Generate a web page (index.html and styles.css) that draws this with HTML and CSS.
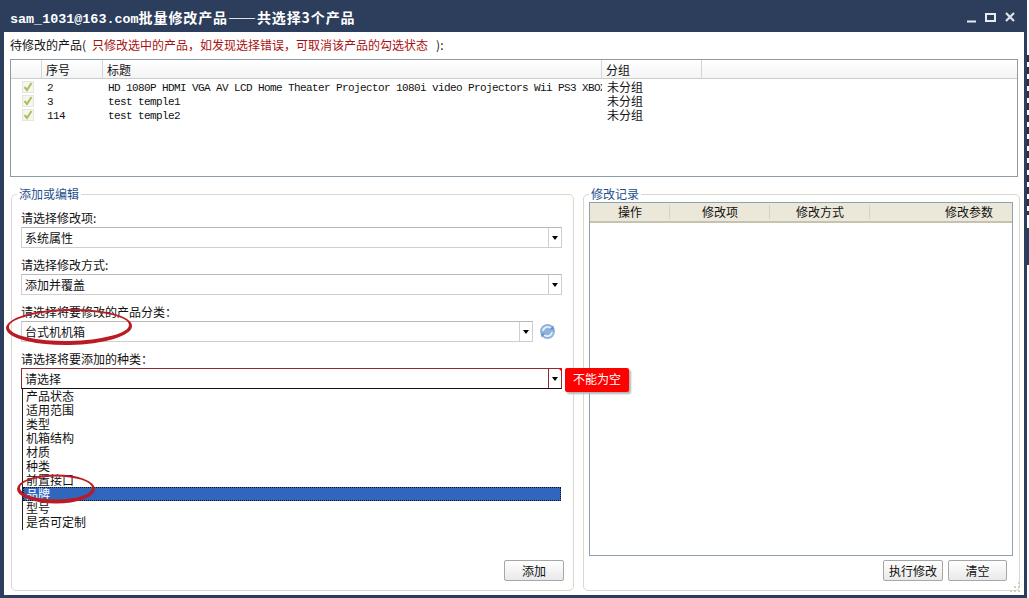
FILE: index.html
```html
<!DOCTYPE html>
<html lang="zh">
<head>
<meta charset="utf-8">
<title>批量修改产品</title>
<link rel="stylesheet" href="styles.css">
</head>
<body>
<div class="window">
  <header class="titlebar">
    <div class="title"><span class="t-lat">sam_1031@163.com</span><span class="t-cjk">批量修改产品——共选择3个产品</span></div>
    <div class="controls">
      <svg width="50" height="14" viewBox="0 0 50 14"><path d="M1 9.500h9" stroke="#e8ecf2" stroke-width="2"/><rect x="20" y="2" width="9" height="7" fill="none" stroke="#e8ecf2" stroke-width="2"/><path d="M40 1l8 8M48 1l-8 8" stroke="#dfe4ec" stroke-width="2.200"/></svg>
    </div>
  </header>
  <main class="content">
    <p class="notice">待修改的产品(<span class="warn">只修改选中的产品&#xFF0C;如发现选择错误&#xFF0C;可取消该产品的勾选状态</span><span class="close">):</span></p>
    <section class="grid">
      <div class="grid-head">
        <div class="gc c0"></div><div class="gc c1">序号</div><div class="gc c2">标题</div><div class="gc c3">分组</div><div class="gc c4"></div>
      </div>
      <div class="grid-row">
        <div class="c0 check"><svg width="12" height="12" viewBox="0 0 12 12"><rect x=".5" y=".5" width="11" height="11" fill="#f6f6ef" stroke="#e6e6dc"/><path d="M2.500 6l2.500 3 4.500-7" fill="none" stroke="#a8c062" stroke-width="2"/></svg></div>
        <div class="c1 cell mono">2</div><div class="c2 cell mono">HD 1080P HDMI VGA AV LCD Home Theater Projector 1080i video Projectors Wii PS3 XBOX</div><div class="c3 cell">未分组</div>
      </div>
      <div class="grid-row">
        <div class="c0 check"><svg width="12" height="12" viewBox="0 0 12 12"><rect x=".5" y=".5" width="11" height="11" fill="#f6f6ef" stroke="#e6e6dc"/><path d="M2.500 6l2.500 3 4.500-7" fill="none" stroke="#a8c062" stroke-width="2"/></svg></div>
        <div class="c1 cell mono">3</div><div class="c2 cell mono">test temple1</div><div class="c3 cell">未分组</div>
      </div>
      <div class="grid-row">
        <div class="c0 check"><svg width="12" height="12" viewBox="0 0 12 12"><rect x=".5" y=".5" width="11" height="11" fill="#f6f6ef" stroke="#e6e6dc"/><path d="M2.500 6l2.500 3 4.500-7" fill="none" stroke="#a8c062" stroke-width="2"/></svg></div>
        <div class="c1 cell mono">114</div><div class="c2 cell mono">test temple2</div><div class="c3 cell">未分组</div>
      </div>
    </section>
    <div class="panels">
      <section class="panel panel-left">
        <h2 class="legend">添加或编辑</h2>
        <div class="field">
          <label class="lbl">请选择修改项:</label>
          <div class="select"><span class="val">系统属性</span><span class="arrow"></span></div>
        </div>
        <div class="field">
          <label class="lbl">请选择修改方式:</label>
          <div class="select"><span class="val">添加并覆盖</span><span class="arrow"></span></div>
        </div>
        <div class="field">
          <label class="lbl">请选择将要修改的产品分类&#xFF1A;</label>
          <div class="select-row">
            <div class="select short"><span class="val">台式机机箱</span><span class="arrow"></span></div>
            <svg class="refresh" width="17" height="17" viewBox="0 0 17 17"><circle cx="8.500" cy="8.500" r="7.500" fill="#8fb2dc"/><path d="M4 8a4.600 4.600 0 0 1 8-2.600M13 9a4.600 4.600 0 0 1-8 2.600" fill="none" stroke="#e4eefa" stroke-width="1.800"/><path d="M10.500 6.500h4v-4zM6.500 10.500h-4v4z" fill="#5f8fc8"/></svg>
          </div>
        </div>
        <div class="field">
          <label class="lbl">请选择将要添加的种类&#xFF1A;</label>
          <div class="select invalid"><span class="val">请选择</span><span class="arrow"></span></div>
          <div class="tip">不能为空</div>
          <ul class="list">
            <li>产品状态</li>
            <li>适用范围</li>
            <li>类型</li>
            <li>机箱结构</li>
            <li>材质</li>
            <li>种类</li>
            <li>前置接口</li>
            <li class="sel">品牌</li>
            <li>型号</li>
            <li>是否可定制</li>
          </ul>
        </div>
        <div class="actions"><button class="btn add">添加</button></div>
      </section>
      <section class="panel panel-right">
        <h2 class="legend">修改记录</h2>
        <div class="log">
          <div class="log-head">
            <div class="lh l1">操作</div><div class="lh l2">修改项</div><div class="lh l3">修改方式</div><div class="lh l4">修改参数</div>
          </div>
        </div>
        <div class="actions right"><button class="btn run">执行修改</button><button class="btn clear">清空</button></div>
        <svg class="grip" width="12" height="11" viewBox="0 0 12 11"><path d="M9 0h2v2H9zM5 4h2v2H5zM9 4h2v2H9zM1 8h2v2H1zM5 8h2v2H5zM9 8h2v2H9z" fill="#cfcfc0"/></svg>
      </section>
    </div>
    <svg class="ink ink1" width="130" height="46" viewBox="0 0 130 46"><g transform="rotate(-1 65 23)"><path fill="#bb1b22" fill-rule="evenodd" d="M2 23a63 18 0 1 0 126 0a63 18 0 1 0-126 0zM5 22a60 15 0 1 0 120 0a60 15 0 1 0-120 0z"/></g></svg>
    <svg class="ink ink2" width="80" height="32" viewBox="0 0 80 32"><path fill="#bb1b22" fill-rule="evenodd" d="M1 16a39 14.500 0 1 0 78 0a39 14.500 0 1 0-78 0zM4 15a36 11.500 0 1 0 72 0a36 11.500 0 1 0-72 0z"/></svg>
  </main>
</div>
<div class="strip"></div>
</body>
</html>
```
FILE: styles.css
```css
* { box-sizing: border-box; }
html, body { margin: 0; padding: 0; }
body {
  width: 1029px; height: 598px; overflow: hidden; display: flex;
  background: #fff;
  font: 12px/14px "Noto Sans CJK SC", "Liberation Sans", sans-serif;
  color: #111;
}
.window {
  width: 1027px; height: 598px; background: #2c3e5c;
  padding: 0 3px 3px 4px; display: flex; flex-direction: column; flex: none;
}
.strip { width: 2px; height: 598px;
  background:
    repeating-linear-gradient(#25324a 0 7px, #fff 7px 12px) 0 55px / 2px 160px no-repeat,
    linear-gradient(#2c3e5c, #2c3e5c) 0 228px / 2px 37px no-repeat,
    #fff; }
.titlebar { height: 32px; display: flex; align-items: flex-start; justify-content: space-between; flex: none; padding: 7px 8px 0 6px; }
.title { color: #fff; font-weight: 700; line-height: 20px; white-space: nowrap; }
.t-lat { font: 700 13.4px/20px "Liberation Mono", monospace; }
.t-cjk { font: 700 14px/20px "Noto Sans CJK SC", sans-serif; letter-spacing: 0.9px; }
.controls { display: flex; height: 14px; margin-top: 5px; }
.content { flex: 1; background: #fff; position: relative; padding: 6px 0 0 6px; display: flex; flex-direction: column; }
.notice { margin: 0; height: 21px; line-height: 14px; }
.warn { color: #a81010; margin-left: 6px; }
.close { margin-left: 8px; }
.grid { height: 118px; border: 1px solid #8c9ba6; flex: none; width: 1008px; }
.grid-head { display: flex; height: 19px; border-bottom: 1px solid #ccc; background: linear-gradient(#fff, #f4f4f4); margin-bottom: 1px; }
.gc { border-right: 1px solid #d5d5d5; padding: 2px 0 0 4px; line-height: 16px; }
.grid-row { display: flex; height: 14px; }
.c0 { width: 31px; flex: none; }
.c1 { width: 61px; flex: none; }
.c2 { width: 499px; flex: none; }
.c3 { width: 100px; flex: none; }
.c4 { flex: 1; border-right: 0; }
.check { padding: 1px 0 0 11px; }
.check svg { display: block; }
.cell { padding-left: 5px; white-space: nowrap; overflow: hidden; }
.mono { font: 11px/16px "Liberation Mono", monospace; letter-spacing: -0.6px; padding-right: 6px; }
.panels { display: flex; gap: 9px; margin-top: 17px; height: 397px; flex: none; }
.panel { border: 1px solid #d8d8cc; border-radius: 5px; position: relative; display: flex; flex-direction: column; flex: none; }
.panel-left { width: 563px; margin-left: 1px; padding: 15px 9px 0 9px; }
.panel-right { width: 437px; padding: 7px 5px 0 5px; }
.legend { position: absolute; top: -8px; left: 5px; margin: 0; padding: 0 2px; background: #fff; font-weight: 400; font-size: 12px; line-height: 14px; color: #1e4f8c; }
.field { position: relative; margin-bottom: 9px; }
.lbl { display: block; height: 17px; line-height: 16px; }
.select { display: flex; height: 21px; border: 1px solid #cfcfcf; border-top-color: #b9b9b9; width: 541px; background: #fff; position: relative; }
.select.short { width: 512px; }
.select-row { display: flex; gap: 5px; align-items: center; }
.refresh { flex: none; margin-left: 1px; }
.val { flex: 1; padding: 3px 3px 0; line-height: 14px; }
.arrow { width: 13px; flex: none; border-left: 1px solid #cfcfcf; position: relative; }
.arrow::after { content: ""; position: absolute; left: 3px; top: 8px; border: 3px solid transparent; border-top: 4px solid #000; border-bottom: 0; }
.invalid { border-color: #8c2a30; border-bottom-color: #111; }
.invalid .arrow { border-left-color: #8c2a30; }
.invalid::after { content: ""; position: absolute; top: -1px; right: -1px; border: 2px solid transparent; border-top-color: #e01010; border-right-color: #e01010; }
.tip { position: absolute; left: 544px; top: 17px; width: 64px; height: 24px; background: #f00; color: #fff; border-radius: 2px; line-height: 21px; padding-left: 8px; box-shadow: 2px 2px 2px #b5b5b5; z-index: 2; }
.list { list-style: none; margin: 0 0 0 1px; padding: 0; border-left: 1px solid #222; width: 539px; height: 141px; }
.list li { height: 14px; line-height: 14px; padding-left: 3px; }
.list .sel { background: #3166bd; color: #fff; outline: 1px dotted #111; outline-offset: -1px; }
.actions { position: absolute; bottom: 9px; right: 9px; display: flex; gap: 5px; }
.actions.right { right: 12px; }
.btn { height: 21px; width: 60px; padding: 0; font: inherit; color: #111; background: linear-gradient(#fff, #e9e9e9); border: 1px solid #a7a7a7; border-radius: 2px; }
.clear { width: 59px; }
.grip { position: absolute; right: -2px; bottom: -3px; }
.log { width: 424px; height: 354px; border: 1px solid #8fa2ad; }
.log-head { display: flex; height: 20px; background: #ebe7d9; border-bottom: 2px solid #c5c2b2; }
.lh { line-height: 18px; text-align: center; position: relative; }
.lh::after { content: ""; position: absolute; right: 0; top: 2px; bottom: 2px; width: 1px; background: #d6d3c4; }
.l1 { width: 80px; }
.l2 { width: 100px; }
.l3 { width: 100px; }
.l4 { flex: 1; text-align: right; padding-right: 19px; }
.l4::after { display: none; }
.ink { position: absolute; }
.ink1 { left: 0; top: 272px; }
.ink2 { left: 12px; top: 441px; }
```
